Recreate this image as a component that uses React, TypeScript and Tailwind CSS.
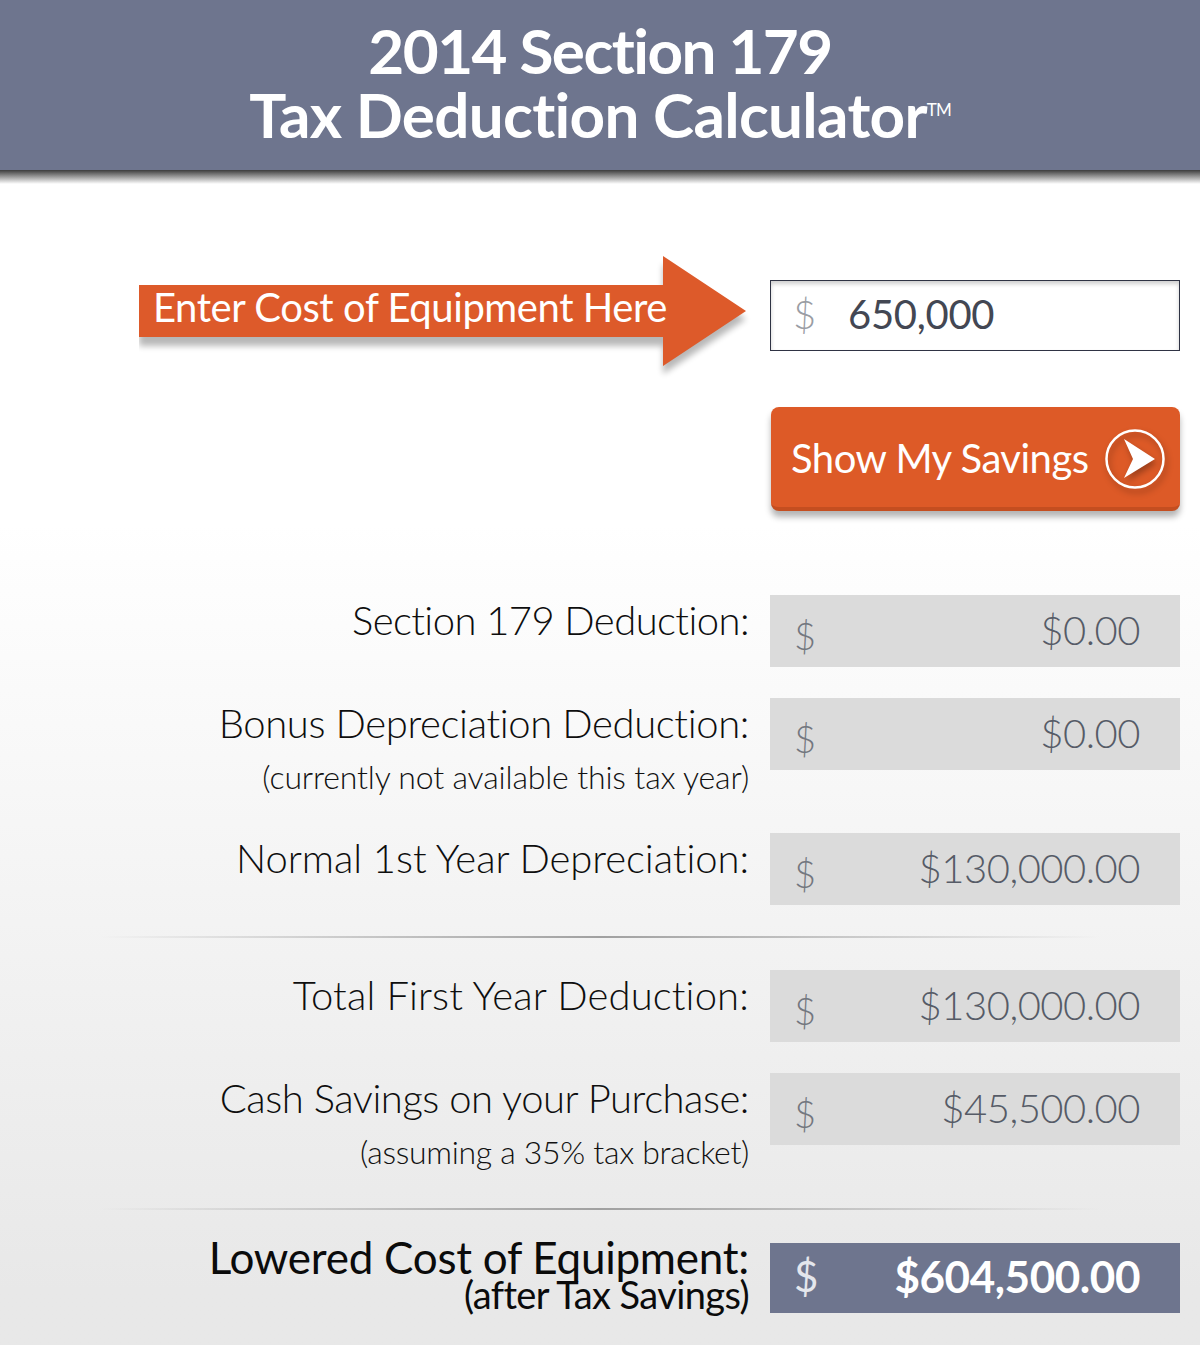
import React from 'react';

interface RowProps {
  label: string;
  note?: string;
  value: string;
  className: string;
  labelClass: string;
  noteClass?: string;
}

function ResultRow({ label, note, value, className, labelClass, noteClass }: RowProps) {
  return (
    <div className={`flex gap-[21px] ${className}`}>
      <div className="flex-1 text-right -mt-px">
        <div className={`text-[40px] leading-[52px] font-light text-[#0e0e0e] ${labelClass}`}>{label}</div>
        {note && <div className={`mt-[7px] text-[32px] leading-[42px] font-light text-[#111] ${noteClass}`}>{note}</div>}
      </div>
      <div className="w-[410px] h-[72px] bg-[#dbdbdb] flex items-center justify-between pl-6 pr-[40px] text-[#565b67] font-light">
        <span className="text-[38px] pt-2 text-[#73777f]">$</span>
        <span className="text-[40px] tracking-[-0.5px] pb-[3px]">{value}</span>
      </div>
    </div>
  );
}

function Divider() {
  return <div className="mx-[100px] h-0.5 bg-gradient-to-r from-transparent via-[#a0a0a0] to-transparent" />;
}

export default function App() {
  return (
    <div className="w-[1200px] h-[1345px] overflow-hidden bg-gradient-to-b from-white from-[39%] to-[#e8e8e8] to-[96%] font-['Lato','Open_Sans',sans-serif]">
      <header className="h-[170px] bg-[#6e758e] text-center text-white font-bold text-[62px] leading-[64px] pt-[18px]">
        <div className="tracking-[-1.55px]">2014 Section 179</div>
        <div className="tracking-[-0.7px]">
          Tax Deduction Calculator
          <span className="text-[17px] font-normal tracking-[-1px] align-[22px] leading-none">TM</span>
        </div>
      </header>
      <div className="h-[14px] bg-gradient-to-b from-[#3c3c3c] to-transparent" />

      <div className="flex mt-[72px] pr-5">
        <div className="relative w-[631px] h-[110px] ml-[139px] text-white">
          <svg width="625" height="125" viewBox="0 0 625 125" className="absolute left-0 top-0">
            <path d="M0 33H524V4L607 59L524 114V86H0Z" fill="#000" opacity="0.28" transform="translate(0 4)" style={{ filter: 'blur(3px)' }} />
            <path d="M0 29H524V0L607 55L524 110V81H0Z" fill="#dd5a2a" />
          </svg>
          <span className="absolute left-[14px] top-[28px] text-[40px] leading-[46px] tracking-[-0.43px] whitespace-nowrap">
            Enter Cost of Equipment Here
          </span>
        </div>
        <div className="w-[410px] h-[71px] mt-[24px] border-[1.5px] border-[#2f3344] shadow-[inset_0_3px_4px_#cfcfcf] bg-white flex items-center pl-[22px] pb-1 text-[#434753]">
          <span className="w-[55px] text-[40px] font-light text-[#9a9da4]">$</span>
          <span className="text-[40px] tracking-[-0.3px]">650,000</span>
        </div>
      </div>

      <div className="flex justify-end pr-5 mt-[41px]">
        <button className="w-[409px] h-[104px] rounded-lg bg-[#dd5a27] border-b-4 border-[#c44e20] shadow-[0_6px_6px_#b5b5b5] flex items-center justify-between pl-5 pr-[15px] pt-[3px] text-white">
          <span className="text-[40px] tracking-[-0.5px] pb-[2px]">Show My Savings</span>
          <svg width="60" height="60" viewBox="0 0 60 60" className="drop-shadow-[2px_4px_3px_rgba(0,0,0,0.3)]">
            <circle cx="30" cy="30" r="28.5" fill="none" stroke="#fff" strokeWidth="2.5" />
            <path d="M19 10L50 30L19 49L28 30Z" fill="#fff" />
          </svg>
        </button>
      </div>

      <div className="pr-5 mt-[84px]">
        <ResultRow label="Section 179 Deduction:" value="$0.00" className="h-[103px]" labelClass="tracking-[-0.57px]" />
        <ResultRow
          label="Bonus Depreciation Deduction:"
          note="(currently not available this tax year)"
          value="$0.00"
          className="h-[135px]"
          labelClass="tracking-[-0.37px]"
          noteClass="tracking-[-0.16px]"
        />
        <ResultRow label="Normal 1st Year Depreciation:" value="$130,000.00" className="h-[103px]" labelClass="tracking-[-0.06px]" />
      </div>
      <Divider />
      <div className="pr-5 mt-[32px]">
        <ResultRow label="Total First Year Deduction:" value="$130,000.00" className="h-[103px]" labelClass="tracking-[0.14px]" />
        <ResultRow
          label="Cash Savings on your Purchase:"
          note="(assuming a 35% tax bracket)"
          value="$45,500.00"
          className="h-[135px]"
          labelClass="tracking-[-0.47px]"
          noteClass="tracking-[-0.31px]"
        />
      </div>
      <Divider />

      <div className="flex gap-[21px] pr-5 mt-[33px]">
        <div className="flex-1 text-right text-[#0b0b0b]">
          <div className="text-[44px] leading-[30px] -mt-px tracking-[-0.26px]">Lowered Cost of Equipment:</div>
          <div className="text-[38px] leading-[42px] mt-[1px] tracking-[-0.6px]">(after Tax Savings)</div>
        </div>
        <div className="w-[410px] h-[70px] bg-[#6e758e] flex items-center justify-between pl-6 pr-[40px] pb-1 text-white font-bold">
          <span className="text-[42px] font-normal text-[#e4e6ec]">$</span>
          <span className="text-[44px] tracking-[-0.44px]">$604,500.00</span>
        </div>
      </div>
    </div>
  );
}
